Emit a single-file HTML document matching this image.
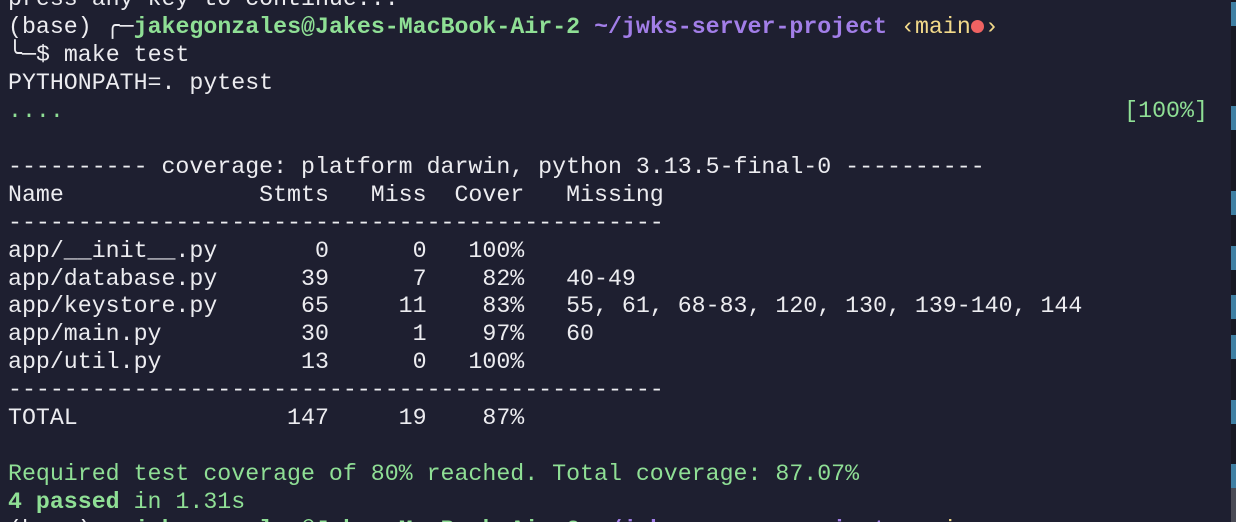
<!DOCTYPE html>
<html><head><meta charset="utf-8"><style>
html,body{margin:0;padding:0;width:1236px;height:522px;overflow:hidden;background:#1e1f30;}
#w{position:relative;width:1236px;height:522px;overflow:hidden;}
pre{position:absolute;left:8px;top:-14px;margin:0;font-family:"Liberation Mono","DejaVu Sans Mono",monospace;font-size:23.25px;line-height:27.95px;color:#ececf0;white-space:pre;}
.g{color:#8fdf95}.gb{color:#8fdf95;font-weight:bold}.p{color:#a27ee8;font-weight:bold}.y{color:#f3da8a}
.r{display:inline-block;width:13px;height:13px;border-radius:50%;background:#ef6262;vertical-align:0px;margin:0 0.5px}
.bar{position:absolute;left:1231px;top:0;width:5px;height:522px;background:#171823;}
.seg{position:absolute;left:1231px;width:5px;background:#3f7fa3;}
</style></head><body><div id="w">
<pre>press any key to continue...
(base) ╭─<span class="gb">jakegonzales@Jakes-MacBook-Air-2</span> <span class="p">~/jwks-server-project</span> <span class="y">‹main<span class="r"></span>›</span>
╰─$ make test
PYTHONPATH=. pytest
<span class="g">....                                                                            [100%]</span>

---------- coverage: platform darwin, python 3.13.5-final-0 ----------
Name              Stmts   Miss  Cover   Missing
-----------------------------------------------
app/__init__.py       0      0   100%
app/database.py      39      7    82%   40-49
app/keystore.py      65     11    83%   55, 61, 68-83, 120, 130, 139-140, 144
app/main.py          30      1    97%   60
app/util.py          13      0   100%
-----------------------------------------------
TOTAL               147     19    87%

<span class="g">Required test coverage of 80% reached. Total coverage: 87.07%</span>
<span class="gb">4 passed</span><span class="g"> in 1.31s</span>
(base) ╭─<span class="gb">jakegonzales@Jakes-MacBook-Air-2</span> <span class="p">~/jwks-server-project</span> <span class="y">‹main›</span></pre>
<div class="bar"></div>
<div class="seg" style="top:2px;height:24px"></div>
<div class="seg" style="top:106px;height:24px"></div>
<div class="seg" style="top:191px;height:24px"></div>
<div class="seg" style="top:246px;height:24px"></div>
<div class="seg" style="top:295px;height:24px"></div>
<div class="seg" style="top:335px;height:24px"></div>
<div class="seg" style="top:400px;height:24px"></div>
<div class="seg" style="top:464px;height:24px"></div>
<div class="seg" style="top:488px;height:34px;background:#4a4b55"></div>
</div></body></html>
